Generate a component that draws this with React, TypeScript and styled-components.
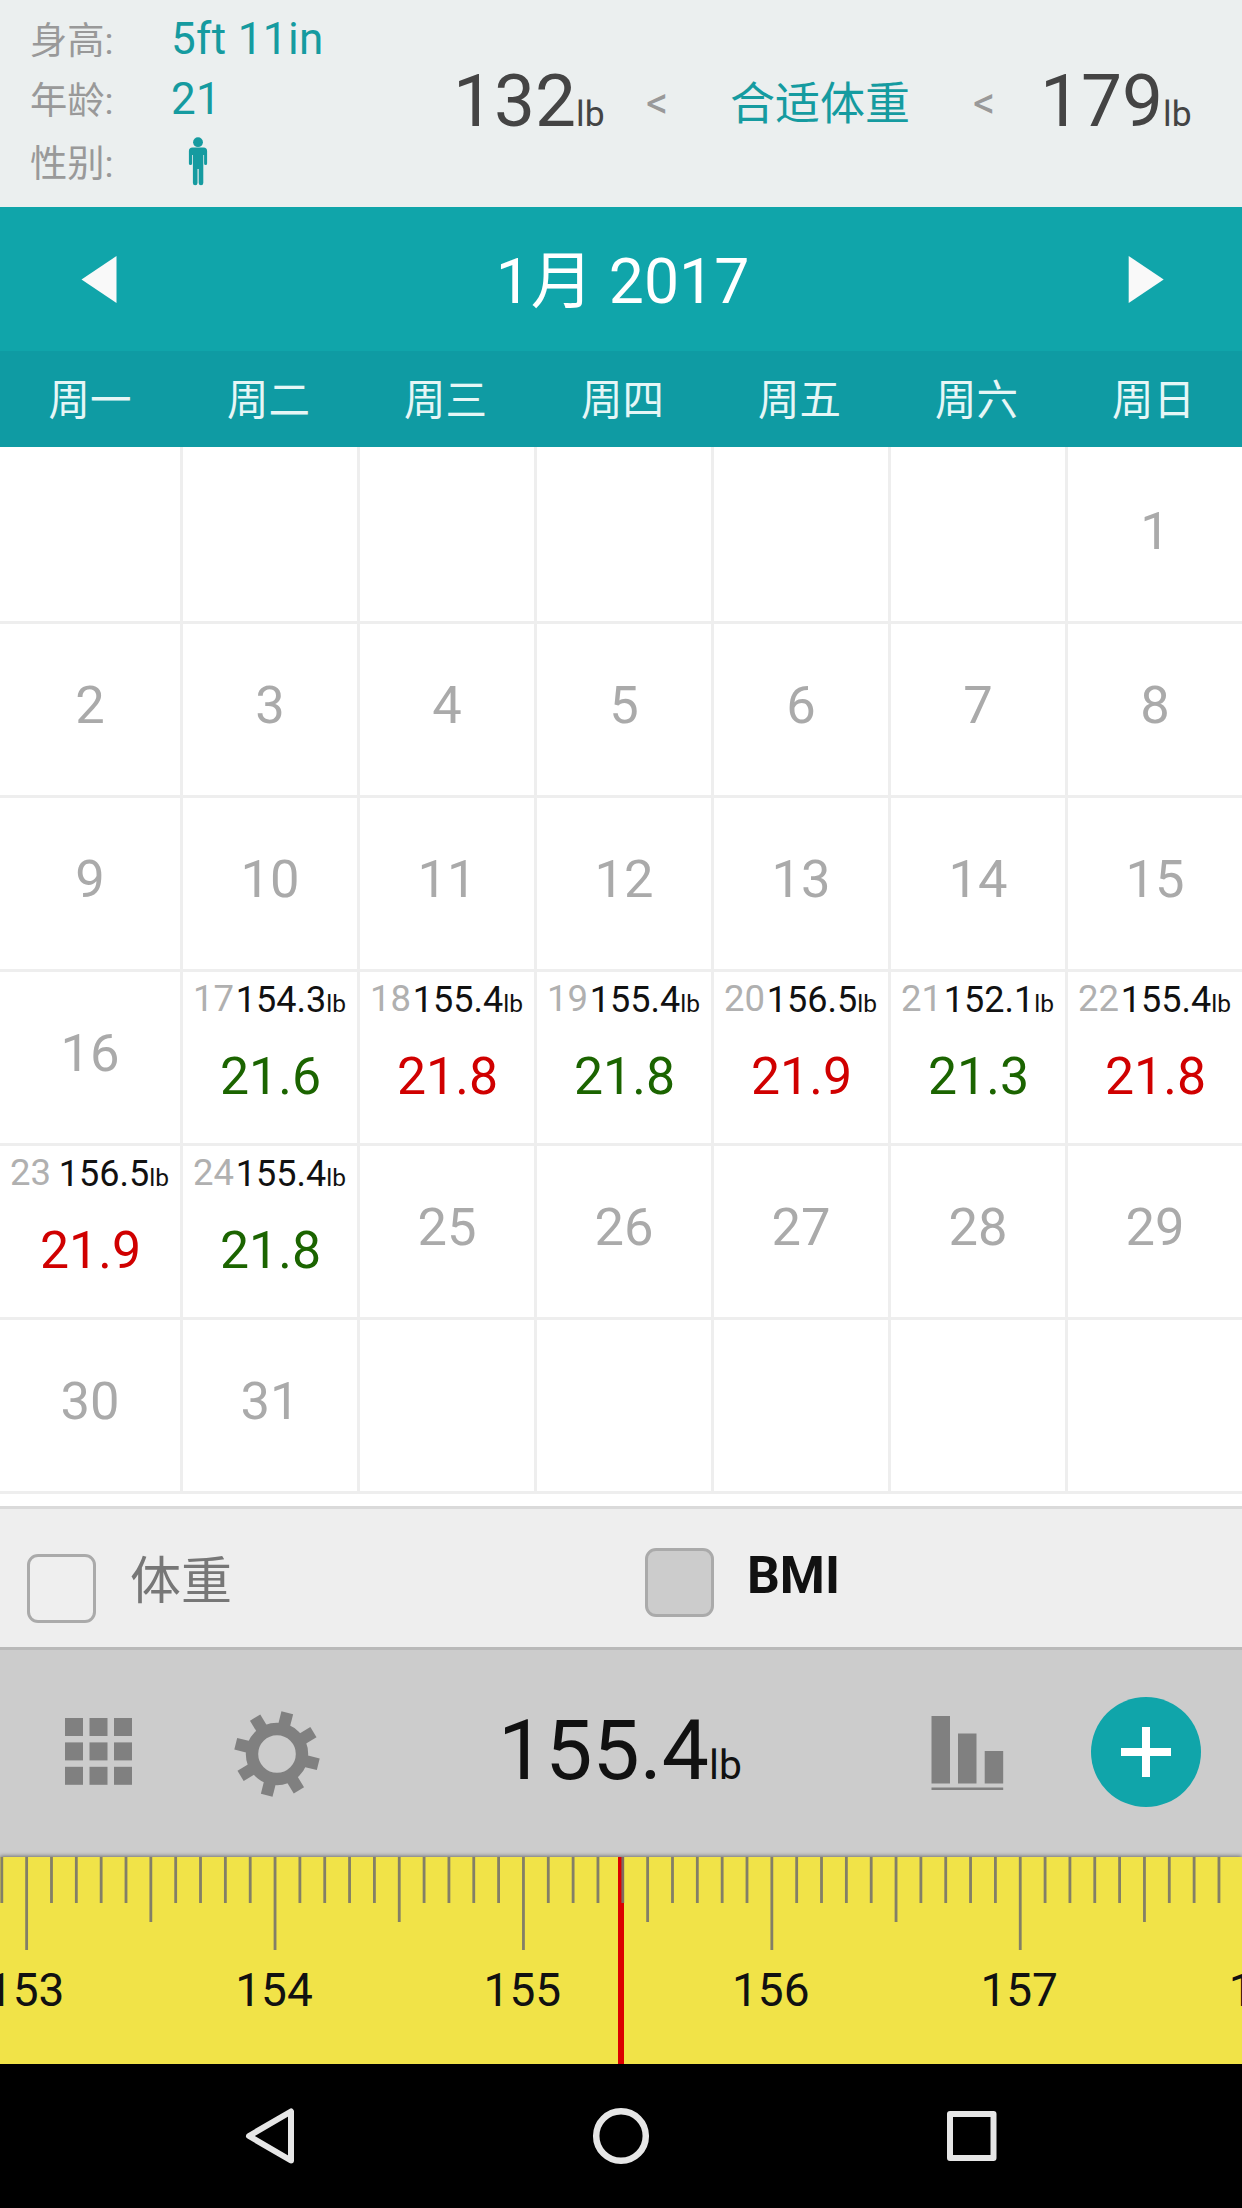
import React from "react";
import styled, { createGlobalStyle } from "styled-components";

const GlobalStyle = createGlobalStyle`
  html, body { margin: 0; padding: 0; background: #fff; }
  * { box-sizing: border-box; }
  body { font-family: Roboto, "Noto Sans CJK SC", sans-serif; }
`;

const TEAL = "#10a5aa";
const LINE = "#eeeeee";

const Screen = styled.div`
  width: 1242px;
  height: 2208px;
  display: flex;
  flex-direction: column;
  overflow: hidden;
  background: #fff;
`;

/* ---------- profile header ---------- */

const Header = styled.header`
  height: 207px;
  display: flex;
  background: #ebefef;
`;

const Profile = styled.div`
  width: 453px;
  padding: 9px 0 0 30px;
`;

const ProfileRow = styled.div<{ $h: number }>`
  display: flex;
  align-items: baseline;
  height: ${(p) => p.$h}px;
  line-height: ${(p) => p.$h}px;
`;

const ProfileLabel = styled.span`
  width: 141px;
  font-size: 37.3px;
  color: #999;
`;

const ProfileValue = styled.span`
  font-size: 44px;
  letter-spacing: 0.35px;
  color: #159ba0;
`;

const PersonSlot = styled.span`
  align-self: flex-start;
  display: flex;
  padding: 8px 0 0 17px;
`;

const IdealRange = styled.div`
  display: grid;
  grid-template-columns: 193px 84px 243px 67px 152px;
  align-items: center;
  height: 207px;
  white-space: nowrap;
`;

const Bound = styled.span`
  font-size: 73px;
  line-height: 100px;
  padding-bottom: 5px;
  color: #444;
`;

const Unit = styled.span`
  font-size: 0.485em;
  line-height: 1;
`;

const Less = styled.span`
  font-size: 44px;
  line-height: 60px;
  padding-bottom: 2px;
  color: #999;
`;

const IdealLabel = styled.span`
  font-size: 45px;
  line-height: 60px;
  padding-top: 2px;
  color: #159ba0;
`;

/* ---------- month navigation ---------- */

const MonthBar = styled.nav`
  height: 144px;
  display: flex;
  justify-content: space-between;
  align-items: center;
  padding: 0 78px 0 81px;
  background: ${TEAL};
`;

const ArrowButton = styled.button`
  display: flex;
  padding: 0;
  border: 0;
  background: none;
`;

const MonthTitle = styled.h1`
  margin: 0;
  padding-top: 6px;
  font-size: 62.5px;
  line-height: 80px;
  font-weight: 400;
  color: #fff;
`;

const Weekdays = styled.div`
  height: 96px;
  display: grid;
  grid-template-columns: 180px repeat(5, 177px) 177px;
  padding-top: 3px;
  background: #0f9ba3;
`;

const Weekday = styled.div`
  text-align: center;
  font-size: 41.5px;
  line-height: 93px;
  color: #e6f6f6;
`;

/* ---------- calendar ---------- */

const Calendar = styled.main`
  display: grid;
  grid-template-columns: 183px repeat(5, 177px) 174px;
  grid-template-rows: 177px repeat(5, 174px);
  height: 1059px;
`;

const Cell = styled.div<{ $first: boolean; $last: boolean }>`
  border-bottom: 3px solid ${LINE};
  border-right: ${(p) => (p.$last ? "0" : `3px solid ${LINE}`)};
  padding-top: ${(p) => (p.$first ? 3 : 0)}px;
`;

const DayNumber = styled.div`
  text-align: center;
  font-size: 52.5px;
  line-height: 163px;
  color: #aaa;
`;

const EntryTop = styled.div`
  display: flex;
  justify-content: space-between;
  height: 52px;
  padding: 4px 11px 0 10px;
  line-height: 48px;
  white-space: nowrap;
`;

const EntryDay = styled.span`
  font-size: 36.5px;
  line-height: 46px;
  color: #b0b0b0;
`;

const EntryWeight = styled.span`
  font-size: 36px;
  color: #111;
`;

const EntryUnit = styled.span`
  font-size: 24.5px;
  line-height: 1;
`;

const EntryBmi = styled.div<{ $up: boolean }>`
  padding-left: 1px;
  text-align: center;
  font-size: 51.8px;
  line-height: 106px;
  color: ${(p) => (p.$up ? "#d00000" : "#1b6400")};
`;

/* ---------- legend ---------- */

const Legend = styled.section`
  height: 141px;
  display: grid;
  grid-template-columns: 618px 1fr;
  border-top: 3px solid #dadada;
  background: #eee;
`;

const Option = styled.label<{ $drop: number }>`
  display: flex;
  align-items: flex-start;
  padding: ${(p) => 39 + p.$drop}px 0 0 27px;
`;

const Box = styled.span<{ $on?: boolean }>`
  width: 69px;
  height: 69px;
  border: 3px solid #aaa;
  border-radius: 11px;
  background: ${(p) => (p.$on ? "#ccc" : "#efefef")};
`;

const OptionText = styled.span<{ $on?: boolean }>`
  padding-left: ${(p) => (p.$on ? 33 : 34)}px;
  margin-top: -2px;
  font-size: ${(p) => (p.$on ? 51.5 : 51)}px;
  line-height: 60px;
  font-weight: ${(p) => (p.$on ? 700 : 400)};
  color: ${(p) => (p.$on ? "#111" : "#777")};
`;

/* ---------- toolbar ---------- */

const Toolbar = styled.section`
  height: 210px;
  display: grid;
  grid-template-columns: 65px 169px 264px 433px 160px 1fr;
  align-items: center;
  border-top: 3px solid #b9b9b9;
  background: #ccc;
`;

const ToolButton = styled.button<{ $column: number; $lift?: number }>`
  grid-column: ${(p) => p.$column};
  display: flex;
  justify-content: flex-start;
  padding: 0 0 ${(p) => p.$lift ?? 0}px 0;
  border: 0;
  background: none;
`;

const CurrentWeight = styled.output`
  grid-column: 4;
  padding-bottom: 6px;
  font-size: 84px;
  line-height: 110px;
  color: #111;
`;

const AddButton = styled.button`
  grid-column: 6;
  width: 110px;
  height: 110px;
  margin-bottom: 3px;
  padding: 0;
  display: flex;
  align-items: center;
  justify-content: center;
  border: 0;
  border-radius: 50%;
  background: ${TEAL};
`;

/* ---------- ruler and system bar ---------- */

const Ruler = styled.section`
  position: relative;
  height: 207px;
  background: #f1e348;
  box-shadow: 0 -1px 4px rgba(0, 0, 0, 0.45);
`;

const RulerDrawing = styled.svg`
  display: block;
`;

const SystemBar = styled.footer`
  position: relative;
  height: 144px;
  display: grid;
  grid-template-columns: 245px 347px 354px 1fr;
  align-items: center;
  background: #000;
`;

const SystemIcon = styled.span<{ $column: number }>`
  grid-column: ${(p) => p.$column};
  display: flex;
`;

type Entry = { weight: string; bmi: string; up: boolean };

const entries: Record<number, Entry> = {
  17: { weight: "154.3", bmi: "21.6", up: false },
  18: { weight: "155.4", bmi: "21.8", up: true },
  19: { weight: "155.4", bmi: "21.8", up: false },
  20: { weight: "156.5", bmi: "21.9", up: true },
  21: { weight: "152.1", bmi: "21.3", up: false },
  22: { weight: "155.4", bmi: "21.8", up: true },
  23: { weight: "156.5", bmi: "21.9", up: true },
  24: { weight: "155.4", bmi: "21.8", up: false },
};

const weekdays = ["周一", "周二", "周三", "周四", "周五", "周六", "周日"];
const FIRST_OFFSET = 6;
const DAYS = 31;

const Person = () => (
  <svg width="20" height="49" viewBox="0 0 20 49" fill="#159ba0">
    <circle cx="10" cy="5.2" r="4.9" />
    <path d="M4.5 10.5h11a3.6 3.6 0 0 1 3.6 3.6v12.4a1.5 1.5 0 0 1-3 0V18h-.8v28a2.2 2.2 0 0 1-4.6 0V32h-1.2v14a2.2 2.2 0 0 1-4.6 0V18h-.8v8.5a1.5 1.5 0 0 1-3.2 0V14.1a3.6 3.6 0 0 1 3.6-3.6z" />
  </svg>
);

const GridIcon = () => (
  <svg width="67" height="67" viewBox="0 0 67 67" fill="#808080">
    {[0, 24.4, 48.8].map((y) =>
      [0, 24.5, 49].map((x) => <rect key={`${x}-${y}`} x={x} y={y} width="18" height="18" />)
    )}
  </svg>
);

const Gear = () => (
  <svg width="86" height="86" viewBox="-43 -43 86 86" fill="#808080">
    <circle r="25" fill="none" stroke="#808080" strokeWidth="12.4" />
    {[0, 1, 2, 3, 4, 5, 6, 7].map((i) => (
      <rect key={i} x="-6" y="-42.5" width="12" height="15" transform={`rotate(${14 + i * 45})`} />
    ))}
  </svg>
);

const Bars = () => (
  <svg width="73" height="75" viewBox="0 0 73 75" fill="#808080">
    <rect x="0.5" y="0" width="18.5" height="67.5" />
    <rect x="27" y="17.5" width="18.5" height="50" />
    <rect x="53.7" y="35" width="18.5" height="32.5" />
    <rect x="0.5" y="71.5" width="71.7" height="2.5" />
  </svg>
);

const TICK = 24.84;
const ticks = Array.from({ length: 50 }, (_, i) => {
  const tenth = (i + 9) % 10;
  return { x: 1.8 + i * TICK, h: tenth === 0 ? 93 : tenth === 5 ? 65 : 46 };
});

const App: React.FC = () => (
  <>
    <GlobalStyle />
    <Screen>
      <Header>
        <Profile>
          <ProfileRow $h={60}>
            <ProfileLabel>身高:</ProfileLabel>
            <ProfileValue>5ft 11in</ProfileValue>
          </ProfileRow>
          <ProfileRow $h={60}>
            <ProfileLabel>年龄:</ProfileLabel>
            <ProfileValue>21</ProfileValue>
          </ProfileRow>
          <ProfileRow $h={70}>
            <ProfileLabel>性别:</ProfileLabel>
            <PersonSlot>
              <Person />
            </PersonSlot>
          </ProfileRow>
        </Profile>
        <IdealRange>
          <Bound>
            132<Unit>lb</Unit>
          </Bound>
          <Less>&lt;</Less>
          <IdealLabel>合适体重</IdealLabel>
          <Less>&lt;</Less>
          <Bound>
            179<Unit>lb</Unit>
          </Bound>
        </IdealRange>
      </Header>

      <MonthBar>
        <ArrowButton aria-label="上个月">
          <svg width="36" height="47" viewBox="0 0 36 47">
            <path d="M35.5 0V47L0.5 23.5z" fill="#f9f9f9" />
          </svg>
        </ArrowButton>
        <MonthTitle>1月 2017</MonthTitle>
        <ArrowButton aria-label="下个月">
          <svg width="36" height="47" viewBox="0 0 36 47">
            <path d="M0.7 0V47L35.7 23.5z" fill="#f9f9f9" />
          </svg>
        </ArrowButton>
      </MonthBar>
      <Weekdays>
        {weekdays.map((d) => (
          <Weekday key={d}>{d}</Weekday>
        ))}
      </Weekdays>

      <Calendar>
        {Array.from({ length: 42 }, (_, i) => {
          const n = i - FIRST_OFFSET + 1;
          const inMonth = n >= 1 && n <= DAYS;
          const entry = entries[n];
          return (
            <Cell key={i} $first={i < 7} $last={i % 7 === 6}>
              {entry ? (
                <>
                  <EntryTop>
                    <EntryDay>{n}</EntryDay>
                    <EntryWeight>
                      {entry.weight}
                      <EntryUnit>lb</EntryUnit>
                    </EntryWeight>
                  </EntryTop>
                  <EntryBmi $up={entry.up}>{entry.bmi}</EntryBmi>
                </>
              ) : (
                inMonth && <DayNumber>{n}</DayNumber>
              )}
            </Cell>
          );
        })}
      </Calendar>

      <Legend>
        <Option $drop={6}>
          <Box />
          <OptionText>体重</OptionText>
        </Option>
        <Option $drop={0}>
          <Box $on />
          <OptionText $on>BMI</OptionText>
        </Option>
      </Legend>

      <Toolbar>
        <ToolButton $column={2} $lift={4} aria-label="日历">
          <GridIcon />
        </ToolButton>
        <ToolButton $column={3} aria-label="设置">
          <Gear />
        </ToolButton>
        <CurrentWeight>
          155.4<Unit>lb</Unit>
        </CurrentWeight>
        <ToolButton $column={5} aria-label="图表">
          <Bars />
        </ToolButton>
        <AddButton aria-label="添加">
          <svg width="50" height="50" viewBox="0 0 50 50" fill="#fff">
            <rect x="0" y="21" width="50" height="8" />
            <rect x="21" y="0" width="8" height="50" />
          </svg>
        </AddButton>
      </Toolbar>

      <Ruler>
        <RulerDrawing width="1242" height="207" viewBox="0 0 1242 207">
          <rect x="618" y="0" width="6" height="207" fill="#dc0000" />
          {ticks.map((t) => (
            <rect key={t.x} x={t.x - 1.4} y="0" width="2.8" height={t.h} fill="#77736a" fillOpacity="0.9" />
          ))}
          {[153, 154, 155, 156, 157, 158].map((n, i) => (
            <text key={n} x={25.6 + i * 248.4} y="149" textAnchor="middle" fontSize="46" fill="#111">
              {n}
            </text>
          ))}
        </RulerDrawing>
      </Ruler>

      <SystemBar>
        <SystemIcon $column={2}>
          <svg width="50" height="56" viewBox="0 0 50 56" fill="none" stroke="#e6e6e6" strokeWidth="6" strokeLinejoin="round">
            <path d="M46 3.5V52.5L4 28z" />
          </svg>
        </SystemIcon>
        <SystemIcon $column={3}>
          <svg width="58" height="58" viewBox="0 0 58 58" fill="none" stroke="#e6e6e6" strokeWidth="6.5">
            <circle cx="29" cy="29" r="24.8" />
          </svg>
        </SystemIcon>
        <SystemIcon $column={4}>
          <svg width="52" height="52" viewBox="0 0 52 52" fill="none" stroke="#e6e6e6" strokeWidth="6" strokeLinejoin="round">
            <rect x="4" y="4" width="43.5" height="44" />
          </svg>
        </SystemIcon>
      </SystemBar>
    </Screen>
  </>
);

export default App;
